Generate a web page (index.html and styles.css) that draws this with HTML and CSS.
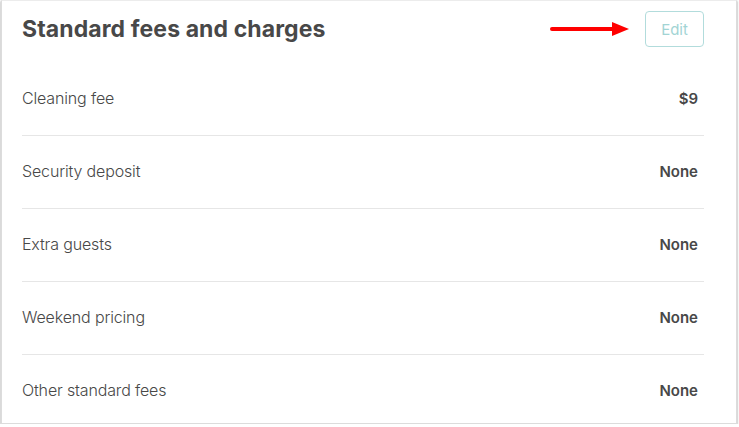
FILE: index.html
```html
<!DOCTYPE html>
<html>
<head>
<meta charset="utf-8">
<link rel="stylesheet" href="styles.css">
</head>
<body>
<div class="card">
  <div class="header">
    <h1 class="title">Standard fees and charges</h1>
    <div class="actions">
      <svg class="arrow" width="82" height="16" viewBox="0 0 82 16">
        <line x1="2" y1="8" x2="64" y2="8" stroke="#ff0000" stroke-width="4" stroke-linecap="round"/>
        <polygon points="62,1 79,8 62,15" fill="#ff0000"/>
      </svg>
      <button class="edit">Edit</button>
    </div>
  </div>
  <div class="rows">
    <div class="row"><span class="label">Cleaning fee</span><span class="value">$9</span></div>
    <div class="row"><span class="label">Security deposit</span><span class="value">None</span></div>
    <div class="row"><span class="label">Extra guests</span><span class="value">None</span></div>
    <div class="row"><span class="label">Weekend pricing</span><span class="value">None</span></div>
    <div class="row"><span class="label">Other standard fees</span><span class="value">None</span></div>
  </div>
</div>
</body>
</html>
```
FILE: styles.css
```css
html, body {
  margin: 0;
  padding: 0;
  background: #ffffff;
}
body {
  font-family: Inter, "Open Sans", sans-serif;
  color: #484848;
}
.card {
  box-sizing: border-box;
  width: 736px;
  margin: 0 2px 0 1px;
  border: 1px solid #dcdcdc;
  border-top-color: #ececec;
  box-shadow: 0 1px 2px rgba(0, 0, 0, 0.45);
  padding: 10px 32px 0 20px;
  background: #fff;
}
.header {
  display: flex;
  align-items: center;
  justify-content: space-between;
  height: 36px;
  margin-bottom: 16px;
}
.title {
  margin: 0;
  font-size: 23px;
  font-weight: 700;
  letter-spacing: 0.1px;
  color: #484848;
}
.actions {
  display: flex;
  align-items: center;
  gap: 13px;
}
.arrow {
  display: block;
}
.edit {
  box-sizing: border-box;
  width: 59px;
  height: 36px;
  border: 1px solid #b2dcdc;
  border-radius: 4px;
  background: #fff;
  color: #a2d4d4;
  font-family: Inter, sans-serif;
  font-size: 15px;
  padding: 0;
}
.row {
  display: flex;
  align-items: center;
  justify-content: space-between;
  height: 70px;
  padding-bottom: 2px;
  border-top: 1px solid #e6e6e6;
}
.row:first-child {
  border-top: none;
}
.row:last-child {
  height: 66px;
  padding: 2px 0 0;
}
.label {
  font-size: 16px;
  font-weight: 300;
  letter-spacing: -0.15px;
}
.value {
  font-size: 15px;
  font-weight: 600;
  margin-right: 6px;
}
```
